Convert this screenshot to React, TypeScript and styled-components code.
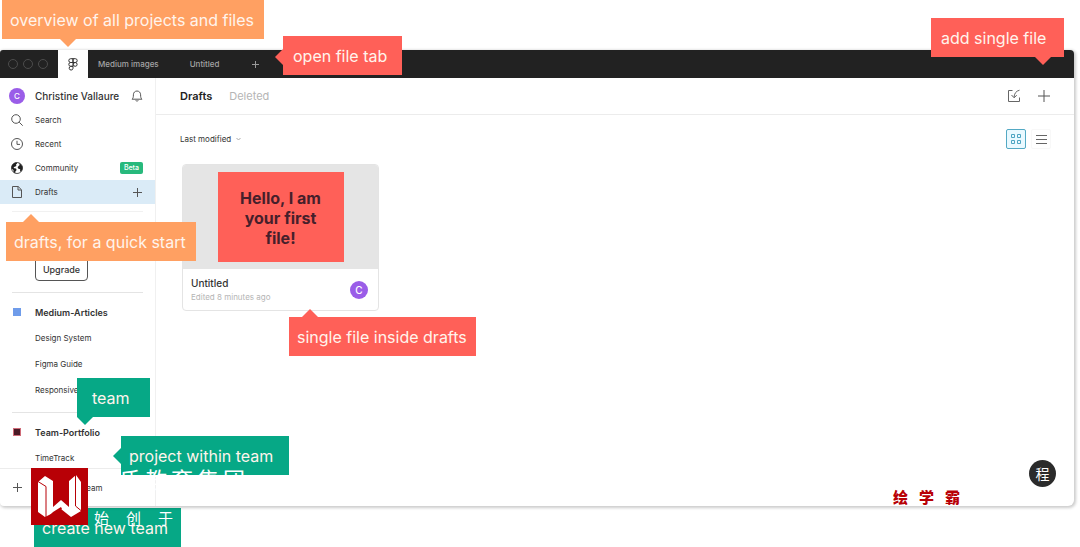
import React from "react";
import styled, { createGlobalStyle, css } from "styled-components";

const Global = createGlobalStyle`
  * { box-sizing: border-box; }
  body { margin: 0; background: #fff; font-family: Inter, "Noto Sans CJK SC", sans-serif; color: #333; }
  button, select { font: inherit; color: inherit; background: none; border: 0; padding: 0; margin: 0; cursor: pointer; }
  a { color: inherit; text-decoration: none; }
  ul { list-style: none; margin: 0; padding: 0; }
  h1, h2, p { margin: 0; }
  svg { display: block; }
`;

const Page = styled.div`
  position: relative;
  min-height: 100vh;
  padding: 50px 6px 41px 0;
  overflow: hidden;
`;

const AppWindow = styled.div`
  position: relative;
  background: #fff;
  border-radius: 3px 4px 6px 4px;
  box-shadow: 1px 1px 3px 1px rgba(0, 0, 0, 0.2);
`;

const TitleBar = styled.header`
  display: flex;
  height: 28px;
  background: #222;
  border-radius: 3px 4px 0 0;
`;

const WindowDots = styled.div`
  display: flex;
  align-items: center;
  gap: 5px;
  width: 58px;
  padding-left: 8px;
`;

const Dot = styled.span`
  width: 10px;
  height: 10px;
  border: 1px solid #4c4c4c;
  border-radius: 50%;
`;

const HomeTab = styled.button`
  display: grid;
  place-items: center;
  width: 30px;
  background: #fff;
`;

const FileTab = styled.button`
  padding-left: 10px;
  margin-right: 21px;
  font-size: 8px;
  font-weight: 500;
  color: #a5a5a5;
`;

const Body = styled.div`
  display: flex;
`;

const Sidebar = styled.aside`
  display: flex;
  flex-direction: column;
  flex: none;
  width: 156px;
  padding-top: 6px;
  border-right: 1px solid #f0f0f0;
`;

const NavRow = styled.a<{ $active?: boolean; $strong?: boolean }>`
  display: grid;
  grid-template-columns: 24px 1fr auto;
  align-items: center;
  height: 24px;
  padding: 0 12px 0 11px;
  font-size: ${(p) => (p.$strong ? "10px" : "8px")};
  font-weight: ${(p) => (p.$strong ? 500 : 400)};
  background: ${(p) => (p.$active ? "#daebf7" : "transparent")};
`;

const Avatar = styled.span<{ $large?: boolean }>`
  display: grid;
  place-items: center;
  flex: none;
  width: ${(p) => (p.$large ? 18 : 16)}px;
  height: ${(p) => (p.$large ? 18 : 16)}px;
  margin-left: ${(p) => (p.$large ? 0 : -2)}px;
  border-radius: 50%;
  background: #9a5de8;
  color: #fff;
  font-size: ${(p) => (p.$large ? 10 : 8)}px;
  font-weight: 500;
`;

const Beta = styled.span`
  padding: 0 4px;
  border-radius: 2px;
  background: #27b97c;
  color: #fff;
  font-size: 7px;
  line-height: 12px;
  font-weight: 500;
`;

const Divider = styled.hr<{ $above?: number; $faint?: boolean }>`
  width: 131px;
  height: 1px;
  margin: ${(p) => p.$above ?? 0}px 12px 0;
  border: 0;
  background: ${(p) => (p.$faint ? "#f1f1f1" : "#e4e4e4")};
`;

const UpgradeArea = styled.div`
  padding: 45px 0 11px 35px;
`;

const UpgradeButton = styled.button`
  display: block;
  width: 53px;
  height: 24px;
  border: 1px solid #555;
  border-radius: 4px;
  font-size: 9px;
  font-weight: 500;
`;

const TeamList = styled.ul`
  display: flex;
  flex-direction: column;
  gap: 6px;
  padding: 9px 0 0 13px;
`;

const TeamRow = styled.li<{ $head?: boolean }>`
  display: grid;
  grid-template-columns: 22px 1fr;
  align-items: center;
  height: 20px;
  font-size: ${(p) => (p.$head ? 9 : 8)}px;
  font-weight: ${(p) => (p.$head ? 600 : 400)};
  white-space: nowrap;
  a { grid-column: 2; }
`;

const Swatch = styled.span<{ $color: string; $inner?: string }>`
  width: 8px;
  height: 8px;
  background: ${(p) => p.$inner || p.$color};
  border: ${(p) => (p.$inner ? 1 : 2)}px solid ${(p) => p.$color};
`;

const CreateTeam = styled.button`
  display: flex;
  align-items: center;
  gap: 12px;
  height: 38px;
  padding-left: 12px;
  border-top: 1px solid #ececec;
  font-size: 8px;
`;

const Main = styled.main`
  flex: 1;
  min-width: 0;
`;

const MainHeader = styled.div`
  display: flex;
  align-items: center;
  gap: 17px;
  height: 37px;
  padding: 0 23px 0 24px;
  border-bottom: 1px solid #ececec;
`;

const Heading = styled.button<{ $active?: boolean }>`
  font-size: 11px;
  font-weight: ${(p) => (p.$active ? 600 : 400)};
  color: ${(p) => (p.$active ? "#222" : "#b5b5b5")};
`;

const Actions = styled.div`
  display: flex;
  align-items: center;
  gap: 16px;
  margin-left: auto;
`;

const Toolbar = styled.div`
  display: flex;
  align-items: center;
  justify-content: space-between;
  padding: 14px 23px 15px 24px;
`;

const SortField = styled.div`
  display: flex;
  align-items: center;
  gap: 4px;
  font-size: 8px;
  select { appearance: none; outline: 0; }
`;

const ViewSwitch = styled.div`
  display: flex;
  gap: 5px;
`;

const ViewButton = styled.button<{ $active?: boolean }>`
  display: grid;
  place-items: center;
  width: 20px;
  height: 20px;
  border-radius: 2px;
  border: 1px solid ${(p) => (p.$active ? "#53a9c4" : "#f8f8f8")};
  background: ${(p) => (p.$active ? "#e9f9ff" : "#fff")};
`;

const FileCard = styled.article`
  width: 197px;
  margin-left: 26px;
  border: 1px solid #e4e4e4;
  border-radius: 4px;
  overflow: hidden;
`;

const Thumb = styled.div`
  display: flex;
  justify-content: center;
  padding: 7px 0;
  background: #e5e5e5;
`;

const Artboard = styled.div`
  width: 126px;
  height: 90px;
  padding: 16px 18px 0;
  background: #ff6058;
  color: #461f2b;
  font-size: 16px;
  line-height: 20px;
  font-weight: 700;
  text-align: center;
`;

const FileInfo = styled.div`
  display: flex;
  align-items: center;
  justify-content: space-between;
  height: 41px;
  padding: 0 10px 0 8px;
  h2 { font-size: 10px; line-height: 14px; font-weight: 500; }
  p { font-size: 8px; line-height: 14px; color: #b5b5b5; }
`;

const tones = { orange: "#ffa062", red: "#ff6058", green: "#06a886" };

type Place = {
  $tone: keyof typeof tones;
  $top: number;
  $left?: number;
  $right?: number;
  $width: number;
  $pad?: number;
  $arrow?: "up" | "down" | "left";
  $at?: number;
};

const arrows = {
  up: css<Place>`left: ${(p) => p.$at}px; top: -8px; border-top: 0; border-bottom-color: ${(p) => tones[p.$tone]};`,
  down: css<Place>`left: ${(p) => p.$at}px; bottom: -8px; border-bottom: 0; border-top-color: ${(p) => tones[p.$tone]};`,
  left: css<Place>`left: -8px; top: ${(p) => p.$at}px; border-left: 0; border-right-color: ${(p) => tones[p.$tone]};`,
};

const Callout = styled.div<Place>`
  position: absolute;
  top: ${(p) => p.$top}px;
  ${(p) => (p.$right !== undefined ? `right: ${p.$right}px` : `left: ${p.$left}px`)};
  width: ${(p) => p.$width}px;
  height: 39px;
  padding-left: ${(p) => p.$pad ?? 8}px;
  background: ${(p) => tones[p.$tone]};
  color: #fff4ec;
  font-size: 16px;
  line-height: 40px;
  white-space: nowrap;
  &::after {
    content: "";
    position: absolute;
    border: 8px solid transparent;
    ${(p) => (p.$arrow ? arrows[p.$arrow] : "display: none;")}
  }
`;

const BrandMark = styled.div`
  position: absolute;
  left: 31px;
  top: 468px;
`;

const SpacedText = styled.div<{ $top: number; $left?: number; $right?: number; $size: number; $gap: number; $color: string; $weight?: number }>`
  position: absolute;
  top: ${(p) => p.$top}px;
  ${(p) => (p.$right !== undefined ? `right: ${p.$right}px` : `left: ${p.$left}px`)};
  display: flex;
  gap: ${(p) => p.$gap}px;
  color: ${(p) => p.$color};
  font-family: "Noto Sans CJK SC", sans-serif;
  font-size: ${(p) => p.$size}px;
  line-height: 24px;
  font-weight: ${(p) => p.$weight || 400};
`;

const HelpBadge = styled.button`
  position: absolute;
  right: 18px;
  bottom: 19px;
  width: 27px;
  height: 27px;
  border-radius: 50%;
  background: #2b2b2b;
  color: #fff;
  font-size: 14px;
  line-height: 27px;
`;

const Icon = ({ size = 12, children }: { size?: number; children: React.ReactNode }) => (
  <svg width={size} height={size} viewBox="0 0 12 12" fill="none" stroke="#555" strokeWidth="1" aria-hidden="true">
    {children}
  </svg>
);

const PlusIcon = ({ size = 12, color = "#555" }) => (
  <svg width={size} height={size} viewBox={`0 0 ${size} ${size}`} stroke={color} aria-hidden="true">
    <path d={`M${size / 2} 1V${size - 1}M1 ${size / 2}H${size - 1}`} />
  </svg>
);

const FigmaIcon = () => (
  <svg width="10" height="13" viewBox="0 0 10 13" fill="none" stroke="#333" aria-hidden="true">
    <path d="M5 .7H2.7a1.9 1.9 0 0 0 0 3.8H5zM5 .7h2.3a1.9 1.9 0 0 1 0 3.8H5zM5 4.5H2.7a1.9 1.9 0 0 0 0 3.8H5zM5 8.3H2.7A1.9 1.9 0 1 0 5 10.3z" />
    <circle cx="7.2" cy="6.4" r="1.9" />
  </svg>
);

const BellIcon = () => (
  <Icon>
    <path d="M1 9.2h10C9.8 8 9.600 7.200 9.600 4.800 9.600 2.500 8 1 6 1S2.400 2.500 2.400 4.800C2.400 7.200 2.200 8 1 9.200zM4.700 10.300c.4 1.100 2.200 1.100 2.600 0" />
  </Icon>
);

const SearchIcon = () => (
  <Icon>
    <circle cx="5" cy="5" r="4.300" />
    <path d="M8.200 8.200l3.500 3.500" />
  </Icon>
);

const ClockIcon = () => (
  <Icon>
    <circle cx="6" cy="6" r="5.500" />
    <path d="M6 2.800V6.400h3" />
  </Icon>
);

const GlobeIcon = () => (
  <Icon>
    <circle cx="6" cy="6" r="5.500" />
    <path fill="#222" stroke="none" d="M.6 4.200C1.600 2 3.400.6 5.400.6l.8 1L5 2.600l.4 1.200L4 4.800 2.600 5l.6 1.200 1.800.4.6 1.400-1.200 1.400L4.200 11.200 2.600 10.200 2.400 8 .6 6.400zM7.400.8l2.400 1.400 1.600 2.400v2.600L10.200 9.600 9 9.200l.2-2-1.800-.4-.8-1.600 1.200-1.400L8.800 3z" />
  </Icon>
);

const FileIcon = () => (
  <Icon>
    <path d="M1.500.5h5.700l3.300 3.300v7.700h-9zM7 .5V4h3.500" />
  </Icon>
);

const ImportIcon = () => (
  <svg width="14" height="14" viewBox="0 0 14 14" fill="none" stroke="#666" aria-hidden="true">
    <path d="M5.500 1.500H1.500v11h11V8.500M12.500 1.200C9 2 7.300 4.500 7 8.500M4.500 6L7 8.700 9.800 6.300" />
  </svg>
);

const GridIcon = () => (
  <svg width="10" height="10" viewBox="0 0 10 10" fill="none" stroke="#4da5c2" aria-hidden="true">
    <path d="M.5.5h3v3h-3zM6.500.5h3v3h-3zM.5 6.500h3v3h-3zM6.500 6.500h3v3h-3z" />
  </svg>
);

const ListIcon = () => (
  <svg width="12" height="11" viewBox="0 0 12 11" stroke="#666" aria-hidden="true">
    <path d="M1 1.500h11M1 5.500h11M1 9.500h11" />
  </svg>
);

const spaced = (text: string) => Array.from(text).map((c) => <span key={c}>{c}</span>);

export default function App() {
  return (
    <Page>
      <Global />
      <Callout $tone="green" $top={508} $left={34} $width={147}>create new team</Callout>
      <AppWindow>
        <TitleBar>
          <WindowDots><Dot /><Dot /><Dot /></WindowDots>
          <HomeTab aria-label="Home"><FigmaIcon /></HomeTab>
          <FileTab>Medium images</FileTab>
          <FileTab>Untitled</FileTab>
          <FileTab aria-label="New tab"><PlusIcon size={9} color="#999" /></FileTab>
        </TitleBar>
        <Body>
          <Sidebar>
            <nav>
              <NavRow href="#" $strong><Avatar>C</Avatar><span>Christine Vallaure</span><BellIcon /></NavRow>
              <NavRow href="#"><SearchIcon />Search</NavRow>
              <NavRow href="#"><ClockIcon />Recent</NavRow>
              <NavRow href="#"><GlobeIcon />Community<Beta>Beta</Beta></NavRow>
              <NavRow href="#" $active><FileIcon />Drafts<PlusIcon size={11} /></NavRow>
            </nav>
            <Divider $above={7} $faint />
            <UpgradeArea><UpgradeButton>Upgrade</UpgradeButton></UpgradeArea>
            <Divider />
            <TeamList>
              <TeamRow $head><Swatch $color="#6f9cea" /><a href="#">Medium-Articles</a></TeamRow>
              <TeamRow><a href="#">Design System</a></TeamRow>
              <TeamRow><a href="#">Figma Guide</a></TeamRow>
              <TeamRow><a href="#">Responsive</a></TeamRow>
            </TeamList>
            <Divider $above={12} />
            <TeamList>
              <TeamRow $head><Swatch $color="#cf6b78" $inner="#4a1a26" /><a href="#">Team-Portfolio</a></TeamRow>
              <TeamRow><a href="#">TimeTrack</a></TeamRow>
            </TeamList>
            <CreateTeam><PlusIcon size={11} />Create New Team</CreateTeam>
          </Sidebar>
          <Main>
            <MainHeader>
              <Heading $active>Drafts</Heading>
              <Heading>Deleted</Heading>
              <Actions>
                <button aria-label="Import"><ImportIcon /></button>
                <button aria-label="New file"><PlusIcon size={14} /></button>
              </Actions>
            </MainHeader>
            <Toolbar>
              <SortField>
                <select aria-label="Sort files"><option>Last modified</option></select>
                <svg width="5" height="4" viewBox="0 0 5 4" fill="none" stroke="#aaa" aria-hidden="true"><path d="M.5 1l2 2 2-2" /></svg>
              </SortField>
              <ViewSwitch>
                <ViewButton $active aria-label="Grid view"><GridIcon /></ViewButton>
                <ViewButton aria-label="List view"><ListIcon /></ViewButton>
              </ViewSwitch>
            </Toolbar>
            <FileCard>
              <Thumb><Artboard>Hello, I am your first file!</Artboard></Thumb>
              <FileInfo>
                <div><h2>Untitled</h2><p>Edited 8 minutes ago</p></div>
                <Avatar $large>C</Avatar>
              </FileInfo>
            </FileCard>
          </Main>
        </Body>
        <HelpBadge>程</HelpBadge>
      </AppWindow>

      <Callout $tone="orange" $top={0} $left={2} $width={262} $arrow="down" $at={58}>overview of all projects and files</Callout>
      <Callout $tone="red" $top={36} $left={283} $width={119} $pad={10} $arrow="left" $at={13}>open file tab</Callout>
      <Callout $tone="red" $top={18} $right={16} $width={133} $pad={10} $arrow="down" $at={104}>add single file</Callout>
      <Callout $tone="orange" $top={222} $left={6} $width={190} $arrow="up" $at={17}>drafts, for a quick start</Callout>
      <Callout $tone="red" $top={317} $left={289} $width={187} $arrow="up" $at={13}>single file inside drafts</Callout>
      <Callout $tone="green" $top={378} $left={77} $width={73} $pad={15} $arrow="down" $at={0}>team</Callout>
      <Callout $tone="green" $top={436} $left={121} $width={168} $arrow="left" $at={12}>project within team</Callout>

      <SpacedText $top={466} $left={119} $size={22} $gap={4} $color="#fff">{spaced("氏教育集团")}</SpacedText>
      <SpacedText $top={506} $left={94} $size={15} $gap={17} $color="#fff">{spaced("始创于")}</SpacedText>
      <SpacedText $top={485} $right={120} $size={15} $gap={11} $color="#b80006" $weight={900}>{spaced("绘学霸")}</SpacedText>
      <BrandMark>
        <svg width="57" height="57" viewBox="0 0 57 57" role="img" aria-label="W">
          <path fill="#b80006" d="M0 0h57v57H0z" />
          <path fill="#fff" d="M7 14l7-6 8 5v26l8-7 8 7V13l7-6 5 7v29l-10 6-10-8-16 8-7-5z" />
          <path fill="#b80006" d="M22 44l8-5 1 2-14 8z" />
          <path fill="none" stroke="#b80006" d="M7 13.500l8 5V49M44.500 7v31l6 5" />
        </svg>
      </BrandMark>
    </Page>
  );
}
